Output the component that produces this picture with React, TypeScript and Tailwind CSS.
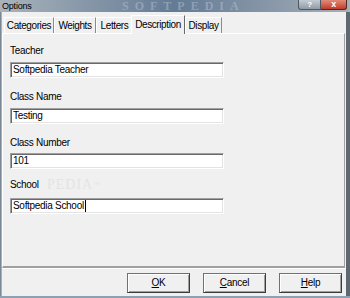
import React from 'react';

const tabs = [
  { label: 'Categories', w: 'w-[50px]' },
  { label: 'Weights', w: 'w-[42px]' },
  { label: 'Letters', w: 'w-[37px]' },
  { label: 'Description', w: 'w-[54px]', active: true },
  { label: 'Display', w: 'w-[37px]' },
];

const Field: React.FC<{ label: string; value: string; labelTop: string; inputTop: string; caret?: boolean }> = ({
  label,
  value,
  labelTop,
  inputTop,
  caret,
}) => (
  <div className="flex flex-col">
    <div className={`relative z-10 h-[12px] leading-[12px] w-fit ${labelTop}`}>{label}</div>
    <div
      className={`${inputTop} w-[214px] h-[16px] flex items-center bg-white border border-t-[#a0a0a0] border-l-[#a0a0a0] border-b-white border-r-white shadow-[inset_1px_1px_0_#696969,inset_-1px_-1px_0_#e3e3e3] pl-[2px] leading-[12px]`}
    >
      <span>{value}</span>
      {caret && <span className="ml-[1px] w-[1px] h-[12px] bg-black" />}
    </div>
  </div>
);

const Button: React.FC<{ hot: string; rest: string }> = ({ hot, rest }) => (
  <button className="w-[63px] h-[20px] flex items-center justify-center bg-[#f0f0f0] border border-[#707070] border-b-[#3c3c3c] border-r-[#3c3c3c] shadow-[inset_1px_1px_0_#ffffff,inset_-1px_-1px_0_#a0a0a0] leading-[12px]">
    <span className="underline underline-offset-[1px]">{hot}</span>
    {rest}
  </button>
);

export default function App() {
  return (
    <div className="w-[350px] h-[298px] flex flex-col overflow-hidden bg-[#7f8c98] font-['Liberation_Sans',Arial,sans-serif] text-[10px] tracking-[-0.3px] text-black">
      {/* Title bar */}
      <div className="relative h-[12px] bg-gradient-to-r from-[#aab3bb] via-[#647b95] to-[#a7b0b8] overflow-hidden">
        <span className="absolute left-[122px] top-0 h-[12px] text-[12px] leading-[12px] font-bold tracking-[6px] text-[#c9d4df]/40 font-['Liberation_Serif',serif]">
          SOFTPEDIA
        </span>
        <span className="absolute left-[2px] top-[1px] text-[9px] tracking-[-0.2px] leading-[10px] text-black">Options</span>
        <div className="absolute right-[3px] top-0 flex h-[10px]">
          <div className="w-[23px] h-full flex items-center justify-center bg-gradient-to-b from-[#c3ccd4] to-[#8f9ba6] border border-t-0 border-[#4d5862] rounded-bl-[3px] text-[8px] font-bold text-white leading-none">
            ?
          </div>
          <div className="w-[26px] h-full flex items-center justify-center bg-gradient-to-b from-[#e08a78] to-[#c0392b] border border-t-0 border-l-0 border-[#4d2a24] rounded-br-[3px] text-[9px] font-bold text-white leading-none">
            x
          </div>
        </div>
      </div>

      <div className="flex flex-1">
        <div className="w-[2px] bg-[#a4b2c0] border-l border-[#7a8896]" />
        <div className="flex-1 flex flex-col bg-[#f0f0f0]">
          {/* Tabs */}
          <div className="flex items-end h-[18px] mt-[3px] ml-[2px] relative z-10">
            {tabs.map((t) =>
              t.active ? (
                <div
                  key={t.label}
                  className={`${t.w} h-[19px] -mb-[1px] -ml-[2px] flex items-center justify-center bg-[#f0f0f0] border-t border-l border-white border-r border-r-[#696969] pb-[2px] tracking-[-0.4px] whitespace-nowrap`}
                >
                  {t.label}
                </div>
              ) : (
                <div
                  key={t.label}
                  className={`${t.w} h-[16px] flex items-center justify-center border-t border-l border-white border-r border-r-[#8a8a8a] tracking-[-0.4px] whitespace-nowrap`}
                >
                  {t.label}
                </div>
              )
            )}
          </div>

          {/* Panel */}
          <div className="relative h-[235px] mr-[1px] border-t border-l border-white border-r border-r-[#a0a0a0] border-b-2 border-b-[#a0a0a0] pl-[7px]">
            <span className="absolute left-[44px] top-[144px] text-[14px] leading-[14px] tracking-[1px] font-['Liberation_Serif',serif] text-[#e4e4e4]">
              PEDIA<sup className="text-[6px]">™</sup>
            </span>
            <Field label="Teacher" value="Softpedia Teacher" labelTop="mt-[11px]" inputTop="mt-[5px]" />
            <Field label="Class Name" value="Testing" labelTop="mt-[13px]" inputTop="mt-[5px]" />
            <Field label="Class Number" value="101" labelTop="mt-[13px]" inputTop="mt-[4px]" />
            <Field label="School" value="Softpedia School" labelTop="mt-[10px]" inputTop="mt-[7px]" caret />
          </div>

          {/* Buttons */}
          <div className="flex-1 flex items-start justify-end gap-[13px] pt-[4px] pr-[4px] border-t border-white">
            <Button hot="O" rest="K" />
            <Button hot="C" rest="ancel" />
            <Button hot="H" rest="elp" />
          </div>
        </div>
        <div className="w-[4px] bg-[#5e6870]" />
      </div>
      <div className="h-[2px] bg-[#8ea0b3]" />
    </div>
  );
}
